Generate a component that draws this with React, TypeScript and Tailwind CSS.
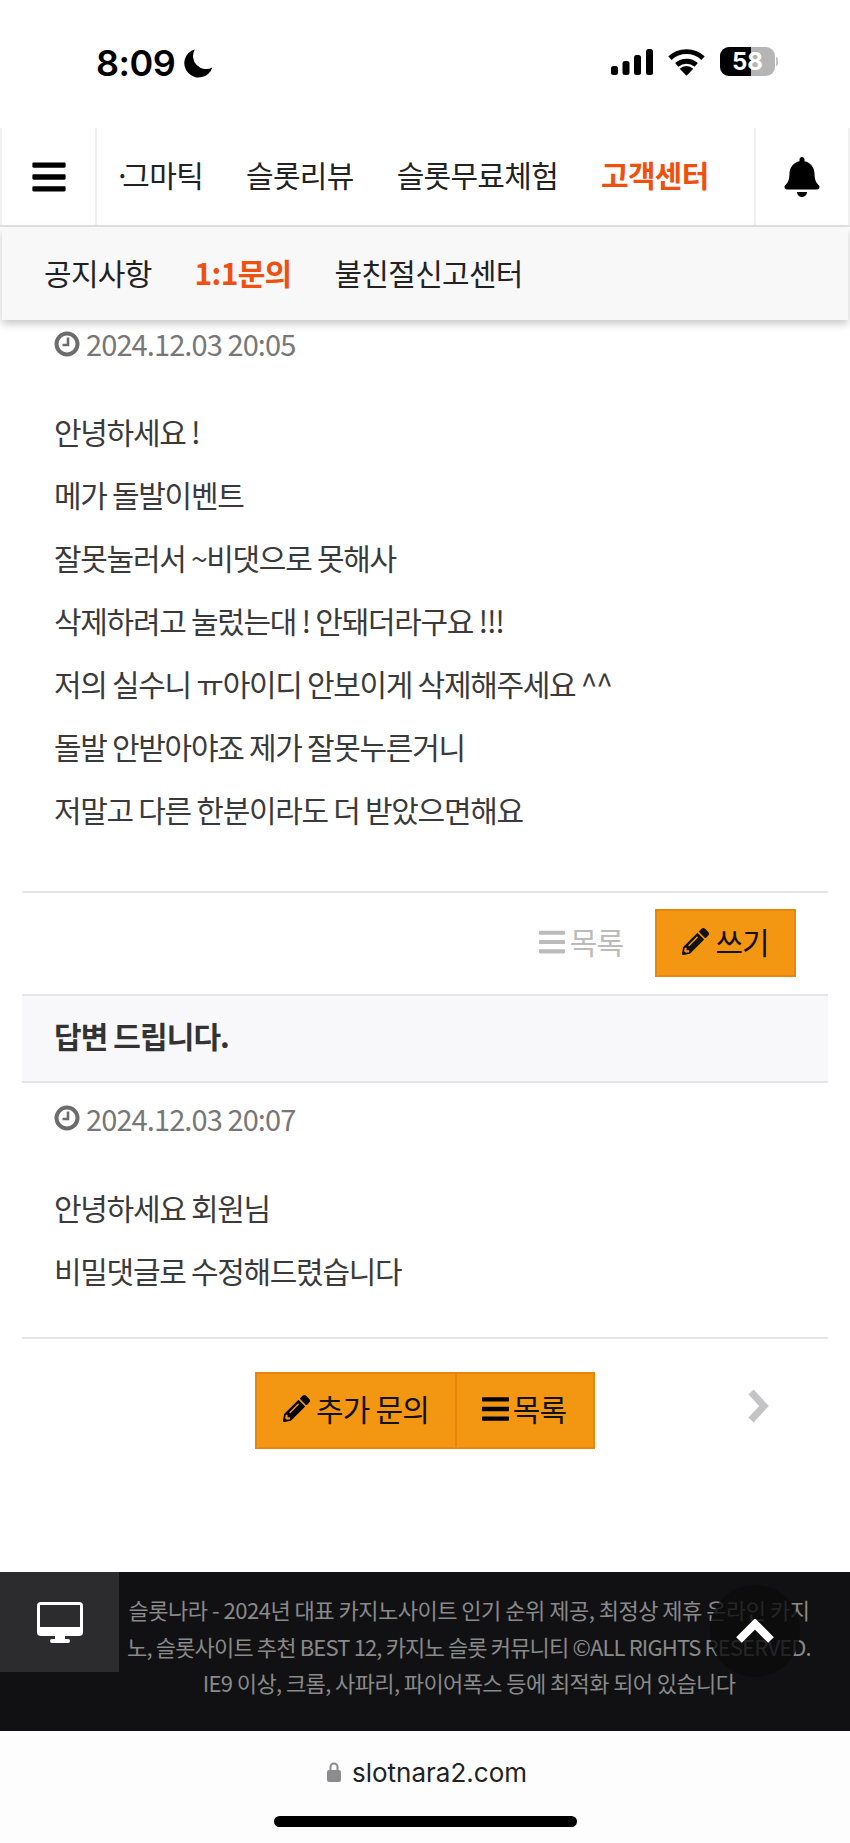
import { FaBars, FaBell, FaPencilAlt } from "react-icons/fa";

const font = "font-['Noto_Sans_CJK_KR','Noto_Sans',sans-serif]";

const question = [
  "안녕하세요 !",
  "메가 돌발이벤트",
  "잘못눌러서 ~비댓으로 못해사",
  "삭제하려고 눌렀는대 ! 안돼더라구요 !!!",
  "저의 실수니 ㅠ아이디 안보이게 삭제해주세요 ^^",
  "돌발 안받아야죠 제가 잘못누른거니",
  "저말고 다른 한분이라도 더 받았으면해요",
];

const answer = ["안녕하세요 회원님", "비밀댓글로 수정해드렸습니다"];

function StatusBar() {
  return (
    <div className="flex h-[128px] items-start justify-between bg-white pl-[96px] pr-[72px] pt-[43px] font-['Inter',sans-serif]">
      <div className="flex items-center gap-[8px] text-[36px] leading-[40px] font-semibold tracking-[-0.5px] text-black">
        <span>8:09</span>
        <svg viewBox="0 0 24 24" className="h-[30px] w-[30px]" fill="#000">
          <path d="M9.5 1a11.5 11.5 0 1 0 14 14.6A10.5 10.5 0 0 1 9.5 1z" />
        </svg>
      </div>
      <div className="flex items-center gap-[15px] pt-[4px]">
        <svg viewBox="0 0 42 26" className="h-[26px] w-[42px]" fill="#000">
          <rect x="0" y="17" width="7" height="9" rx="2.5" />
          <rect x="11.5" y="12" width="7" height="14" rx="2.5" />
          <rect x="23" y="6" width="7" height="20" rx="2.5" />
          <rect x="35" y="0" width="7" height="26" rx="2.5" />
        </svg>
        <svg viewBox="0 0 38 28" className="h-[28px] w-[37px]" fill="none" stroke="#000" strokeWidth="5">
          <path d="M2 10a25 25 0 0 1 34 0" />
          <path d="M9 17a15 15 0 0 1 20 0" />
          <path d="M19 28l-7-7a10 10 0 0 1 14 0z" fill="#000" stroke="none" />
        </svg>
        <div className="flex items-center gap-[1px]">
          <div className="relative flex h-[29px] w-[55px] items-center justify-center overflow-hidden rounded-[9px] bg-[#b5b5b5] text-[24px] font-bold text-white">
            <div className="absolute inset-y-0 left-0 w-[31px] bg-black" />
            <span className="relative">58</span>
          </div>
          <div className="h-[9px] w-[2px] rounded-r bg-[#c4c4c4]" />
        </div>
      </div>
    </div>
  );
}

function TopNav() {
  return (
    <div className="flex h-[99px] border-b-2 border-[#e3e3e5] bg-white">
      <div className="flex w-[97px] shrink-0 items-center justify-center border-x-2 border-[#f0f0f1]">
        <FaBars className="h-[38px] w-[34px] text-black" />
      </div>
      <div className="flex min-w-0 flex-1 items-center overflow-hidden pb-[4px] pl-[17px] text-[30px] tracking-[-0.7px] text-[#222]">
        <span className="mr-[43px] shrink-0">
          <span className="tracking-[-8.5px]">·</span>그마틱
        </span>
        <span className="mr-[43px] shrink-0">슬롯리뷰</span>
        <span className="mr-[43px] shrink-0">슬롯무료체험</span>
        <span className="shrink-0 font-bold text-[#f0500f]">고객센터</span>
      </div>
      <div className="flex w-[96px] shrink-0 items-center justify-center border-x-2 border-[#f0f0f1]">
        <FaBell className="h-[40px] w-[36px] text-black" />
      </div>
    </div>
  );
}

function SubNav() {
  return (
    <div className="relative z-10 mx-[2px] flex h-[93px] items-center gap-[43px] bg-[#f8f8f9] pb-[2px] pl-[42px] text-[30px] tracking-[-0.7px] text-[#222] shadow-[0_4px_8px_rgba(0,0,0,0.22)]">
      <span>공지사항</span>
      <span className="font-bold text-[#f0500f]">1:1문의</span>
      <span>불친절신고센터</span>
    </div>
  );
}

function DateLine({ value }: { value: string }) {
  return (
    <div className="flex items-center gap-[6px] text-[29px] tracking-[-0.9px] text-[#777]">
      <svg viewBox="0 0 26 26" className="h-[26px] w-[26px] shrink-0" fill="none" stroke="#6c6c6c">
        <circle cx="13" cy="13" r="10.5" strokeWidth="4" />
        <path d="M14 6.5V14H8.5" strokeWidth="2.6" />
      </svg>
      <span>{value}</span>
    </div>
  );
}

function Lines({ items }: { items: string[] }) {
  return (
    <div className="text-[30px] leading-[63px] tracking-[-1.3px] text-[#3a3a3a]">
      {items.map((item) => (
        <p key={item}>{item}</p>
      ))}
    </div>
  );
}

export default function App() {
  return (
    <div className={`${font} relative h-[1843px] w-[850px] overflow-hidden bg-white`}>
      <StatusBar />
      <TopNav />
      <SubNav />

      <div className="px-[22px]">
        <div className="px-[32px] pt-[2px]">
          <DateLine value="2024.12.03 20:05" />
          <div className="mt-[34px]">
            <Lines items={question} />
          </div>
        </div>

        <div className="mt-[50px] flex h-[105px] items-start justify-end border-y-2 border-[#e5e5e7] pr-[32px] pt-[16px]">
          <div className="mr-[32px] flex h-[66px] items-center gap-[5px] text-[30px] tracking-[-1px] text-[#bbb]">
            <FaBars className="h-[30px] w-[26px]" />
            <span>목록</span>
          </div>
          <button className="flex h-[68px] w-[141px] items-center justify-center gap-[6px] border-2 border-[#e8850f] bg-[#f39712] pb-[2px] text-[30px] tracking-[-1px] text-[#111]">
            <FaPencilAlt className="h-[27px] w-[27px]" />
            쓰기
          </button>
        </div>

        <div className="flex h-[87px] items-center border-b-2 border-[#e5e5e7] bg-[#f8f8fa] px-[32px] pb-[6px] text-[30px] font-bold tracking-[-0.9px] text-[#333]">
          답변 드립니다.
        </div>

        <div className="px-[32px] pt-[14px]">
          <DateLine value="2024.12.03 20:07" />
          <div className="mt-[36px]">
            <Lines items={answer} />
          </div>
        </div>

        <div className="relative mt-[35px] flex justify-center border-t-2 border-[#e5e5e7] pt-[33px]">
          <div className="flex h-[77px] border-2 border-[#e8850f] bg-[#f39712] pb-[4px] text-[30px] tracking-[-0.8px] text-[#111]">
            <div className="-mb-[4px] flex w-[200px] items-center justify-center gap-[6px] border-r-2 border-[#e8850f] pb-[4px]">
              <FaPencilAlt className="h-[27px] w-[27px] text-black" />
              추가 문의
            </div>
            <div className="flex w-[136px] items-center justify-center gap-[4px] pr-[2px]">
              <FaBars className="h-[32px] w-[27px] text-black" />
              목록
            </div>
          </div>
          <svg
            viewBox="0 0 22 34"
            className="absolute right-[59px] top-[50px] h-[34px] w-[22px]"
            fill="none"
            stroke="#c4c4c6"
            strokeWidth="7"
          >
            <path d="M4 3l13 14L4 31" />
          </svg>
        </div>
      </div>

      <div className="relative mt-[123px] flex h-[159px] bg-[#111113]">
        <div className="flex h-[100px] w-[119px] shrink-0 items-center justify-center bg-[#2c2c2e]">
          <svg viewBox="0 0 46 41" className="h-[41px] w-[46px]">
            <rect x="0" y="0" width="46" height="34" rx="4" fill="#fff" />
            <rect x="3" y="3" width="40" height="22" fill="#2c2c2e" />
            <path d="M18 34h10v3h3a2 2 0 0 1 0 4H15a2 2 0 0 1 0-4h3z" fill="#fff" />
          </svg>
        </div>
        <div className="min-w-0 flex-1 whitespace-nowrap pl-[6px] pr-[37px] pt-[19px] text-center text-[22px] leading-[36.5px] text-[#8a8a8a]">
          <p className="tracking-[-0.5px]">슬롯나라 - 2024년 대표 카지노사이트 인기 순위 제공, 최정상 제휴 온라인 카지</p>
          <p className="tracking-[-0.85px]">노, 슬롯사이트 추천 BEST 12, 카지노 슬롯 커뮤니티 ©ALL RIGHTS RESERVED.</p>
          <p className="tracking-[-0.6px]">IE9 이상, 크롬, 사파리, 파이어폭스 등에 최적화 되어 있습니다</p>
        </div>
        <div className="absolute left-[710px] top-[13px] flex h-[92px] w-[90px] items-center justify-center rounded-full bg-[#0b0b0c]/80">
          <svg viewBox="0 0 38 24" className="h-[24px] w-[38px]" fill="none" stroke="#fff" strokeWidth="8">
            <path d="M3 21L19 5l16 16" />
          </svg>
        </div>
      </div>

      <div className="flex h-[113px] flex-col items-center bg-[#fdfdfd] pt-[26px]">
        <div className="flex h-[30px] items-center gap-[11px] pl-[4px] font-['Inter',sans-serif] text-[26px] text-[#222]">
          <svg viewBox="0 0 14 20" className="h-[20px] w-[14px]">
            <path d="M3.5 8V5a3.5 3.5 0 0 1 7 0v3" fill="none" stroke="#8c8c8e" strokeWidth="2" />
            <rect x="0" y="8" width="14" height="12" rx="2" fill="#8c8c8e" />
          </svg>
          slotnara2.com
        </div>
        <div className="mt-[29px] h-[11px] w-[303px] rounded-full bg-black" />
      </div>
    </div>
  );
}
